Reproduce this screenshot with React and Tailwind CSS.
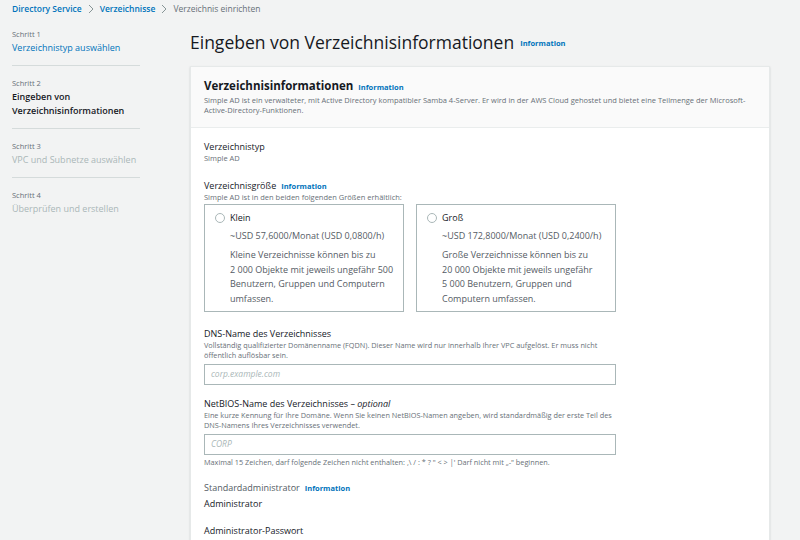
import React from "react";

function Info({ className = "" }) {
  return <span className={"font-bold text-[#0073bb] text-[7.5px] " + className}>Information</span>;
}

function Chevron() {
  return (
    <svg width="8" height="10" viewBox="0 0 8 10" className="mx-[5px]">
      <path d="M2 1l4 4-4 4" fill="none" stroke="#879596" strokeWidth="1" />
    </svg>
  );
}

function Step({ n, label, state, last }) {
  return (
    <div className={"pt-[11px] pb-[10px] " + (last ? "" : "border-b border-[#d5dbdb]")}>
      <div className="text-[7.5px] leading-[12px] text-[#687078]">Schritt {n}</div>
      <div
        className={
          "text-[9px] leading-[14px] mt-[1px] " +
          (state === "done"
            ? "text-[#0073bb]"
            : state === "active"
            ? "text-[#16191f] font-semibold"
            : "text-[#aab7b8]")
        }
      >
        {label}
      </div>
    </div>
  );
}

function SizeCard({ title, price, lines }) {
  return (
    <div className="w-[200px] h-[108px] border border-[#aab7b8] bg-white pl-[10px] pt-[6px]">
      <div className="flex items-center">
        <span className="w-[10px] h-[10px] rounded-full border border-[#aab7b8] bg-white"></span>
        <span className="ml-[5px] text-[9px] leading-[14px] text-[#16191f]">{title}</span>
      </div>
      <div className="ml-[15px] mt-[4px] text-[9px] leading-[14px] text-[#545b64]">{price}</div>
      <div className="ml-[15px] mt-[5px] text-[9px] leading-[14.5px] text-[#545b64]">
        {lines.map((l, i) => (
          <div key={i}>{l}</div>
        ))}
      </div>
    </div>
  );
}

export default function App() {
  return (
    <div className="w-[800px] h-[540px] overflow-hidden bg-[#f2f3f3] font-['Open_Sans',sans-serif] text-[#16191f]">
      <div className="h-[17px] pl-[12px] pt-[1px] flex items-center text-[8.5px]">
        <span className="font-semibold text-[#0073bb]">Directory Service</span>
        <Chevron />
        <span className="font-semibold text-[#0073bb]">Verzeichnisse</span>
        <Chevron />
        <span className="text-[#687078]">Verzeichnis einrichten</span>
      </div>
      <div className="flex">
        <div className="w-[128px] ml-[12px]">
          <Step n={1} label="Verzeichnistyp auswählen" state="done" />
          <Step n={2} label={<>Eingeben von<br />Verzeichnisinformationen</>} state="active" />
          <Step n={3} label="VPC und Subnetze auswählen" state="todo" />
          <Step n={4} label="Überprüfen und erstellen" state="todo" last />
        </div>
        <div className="ml-[50px] w-[580px]">
          <div className="h-[49px] flex items-center pt-[2px]">
            <span className="text-[17.5px] text-[#16191f]">Eingeben von Verzeichnisinformationen</span>
            <Info className="ml-[6px] mt-[3px]" />
          </div>
          <div className="bg-white border border-[#e6e9e9] shadow-[0_1px_2px_rgba(0,28,36,0.15)]">
            <div className="bg-[#fafafa] border-b border-[#eaeded] px-[13px] pt-[11px] pb-[12px]">
              <div className="flex items-baseline">
                <span className="font-bold text-[11.5px] leading-[16px]">Verzeichnisinformationen</span>
                <Info className="ml-[5px]" />
              </div>
              <div className="text-[7.5px] leading-[10px] text-[#687078] mt-[1px] pr-[4px]">
                Simple AD ist ein verwalteter, mit Active Directory kompatibler Samba 4-Server. Er wird in der AWS Cloud gehostet und bietet eine Teilmenge der Microsoft-Active-Directory-Funktionen.
              </div>
            </div>
            <div className="px-[13px] pt-[12px] pb-[20px]">
              <div className="text-[9px] leading-[13px]">Verzeichnistyp</div>
              <div className="text-[7.5px] leading-[10px] text-[#687078]">Simple AD</div>

              <div className="mt-[16px] flex items-baseline">
                <span className="text-[9px] leading-[13px]">Verzeichnisgröße</span>
                <Info className="ml-[5px]" />
              </div>
              <div className="text-[7.5px] leading-[10px] text-[#687078]">Simple AD ist in den beiden folgenden Größen erhältlich:</div>
              <div className="flex gap-[12px] mt-[2px]">
                <SizeCard
                  title="Klein"
                  price="~USD 57,6000/Monat (USD 0,0800/h)"
                  lines={["Kleine Verzeichnisse können bis zu", "2 000 Objekte mit jeweils ungefähr 500", "Benutzern, Gruppen und Computern", "umfassen."]}
                />
                <SizeCard
                  title="Groß"
                  price="~USD 172,8000/Monat (USD 0,2400/h)"
                  lines={["Große Verzeichnisse können bis zu", "20 000 Objekte mit jeweils ungefähr", "5 000 Benutzern, Gruppen und", "Computern umfassen."]}
                />
              </div>

              <div className="mt-[15px] text-[9px] leading-[13px]">DNS-Name des Verzeichnisses</div>
              <div className="w-[410px] text-[7.3px] leading-[10px] text-[#687078]">
                Vollständig qualifizierter Domänenname (FQDN). Dieser Name wird nur innerhalb Ihrer VPC aufgelöst. Er muss nicht öffentlich auflösbar sein.
              </div>
              <div className="mt-[4px] w-[412px] h-[21px] border border-[#aab7b8] bg-white flex items-center pl-[6px] text-[8.5px] italic text-[#aab7b8]">
                corp.example.com
              </div>

              <div className="mt-[12px] text-[9px] leading-[13px]">
                NetBIOS-Name des Verzeichnisses – <span className="italic">optional</span>
              </div>
              <div className="w-[410px] text-[7.3px] leading-[10px] text-[#687078]">
                Eine kurze Kennung für Ihre Domäne. Wenn Sie keinen NetBIOS-Namen angeben, wird standardmäßig der erste Teil des DNS-Namens Ihres Verzeichnisses verwendet.
              </div>
              <div className="mt-[4px] w-[412px] h-[21px] border border-[#aab7b8] bg-white flex items-center pl-[6px] text-[8.5px] italic text-[#aab7b8]">
                CORP
              </div>
              <div className="mt-[2px] text-[7.3px] leading-[10px] text-[#687078]">
                Maximal 15 Zeichen, darf folgende Zeichen nicht enthalten: ,\ / : * ? " &lt; &gt; |' Darf nicht mit „-" beginnen.
              </div>

              <div className="mt-[14px] flex items-baseline">
                <span className="text-[9px] leading-[13px] text-[#545b64]">Standardadministrator</span>
                <Info className="ml-[5px]" />
              </div>
              <div className="mt-[2px] text-[9px] leading-[13px]">Administrator</div>
              <div className="mt-[14px] text-[9px] leading-[13px]">Administrator-Passwort</div>
            </div>
          </div>
        </div>
      </div>
    </div>
  );
}
